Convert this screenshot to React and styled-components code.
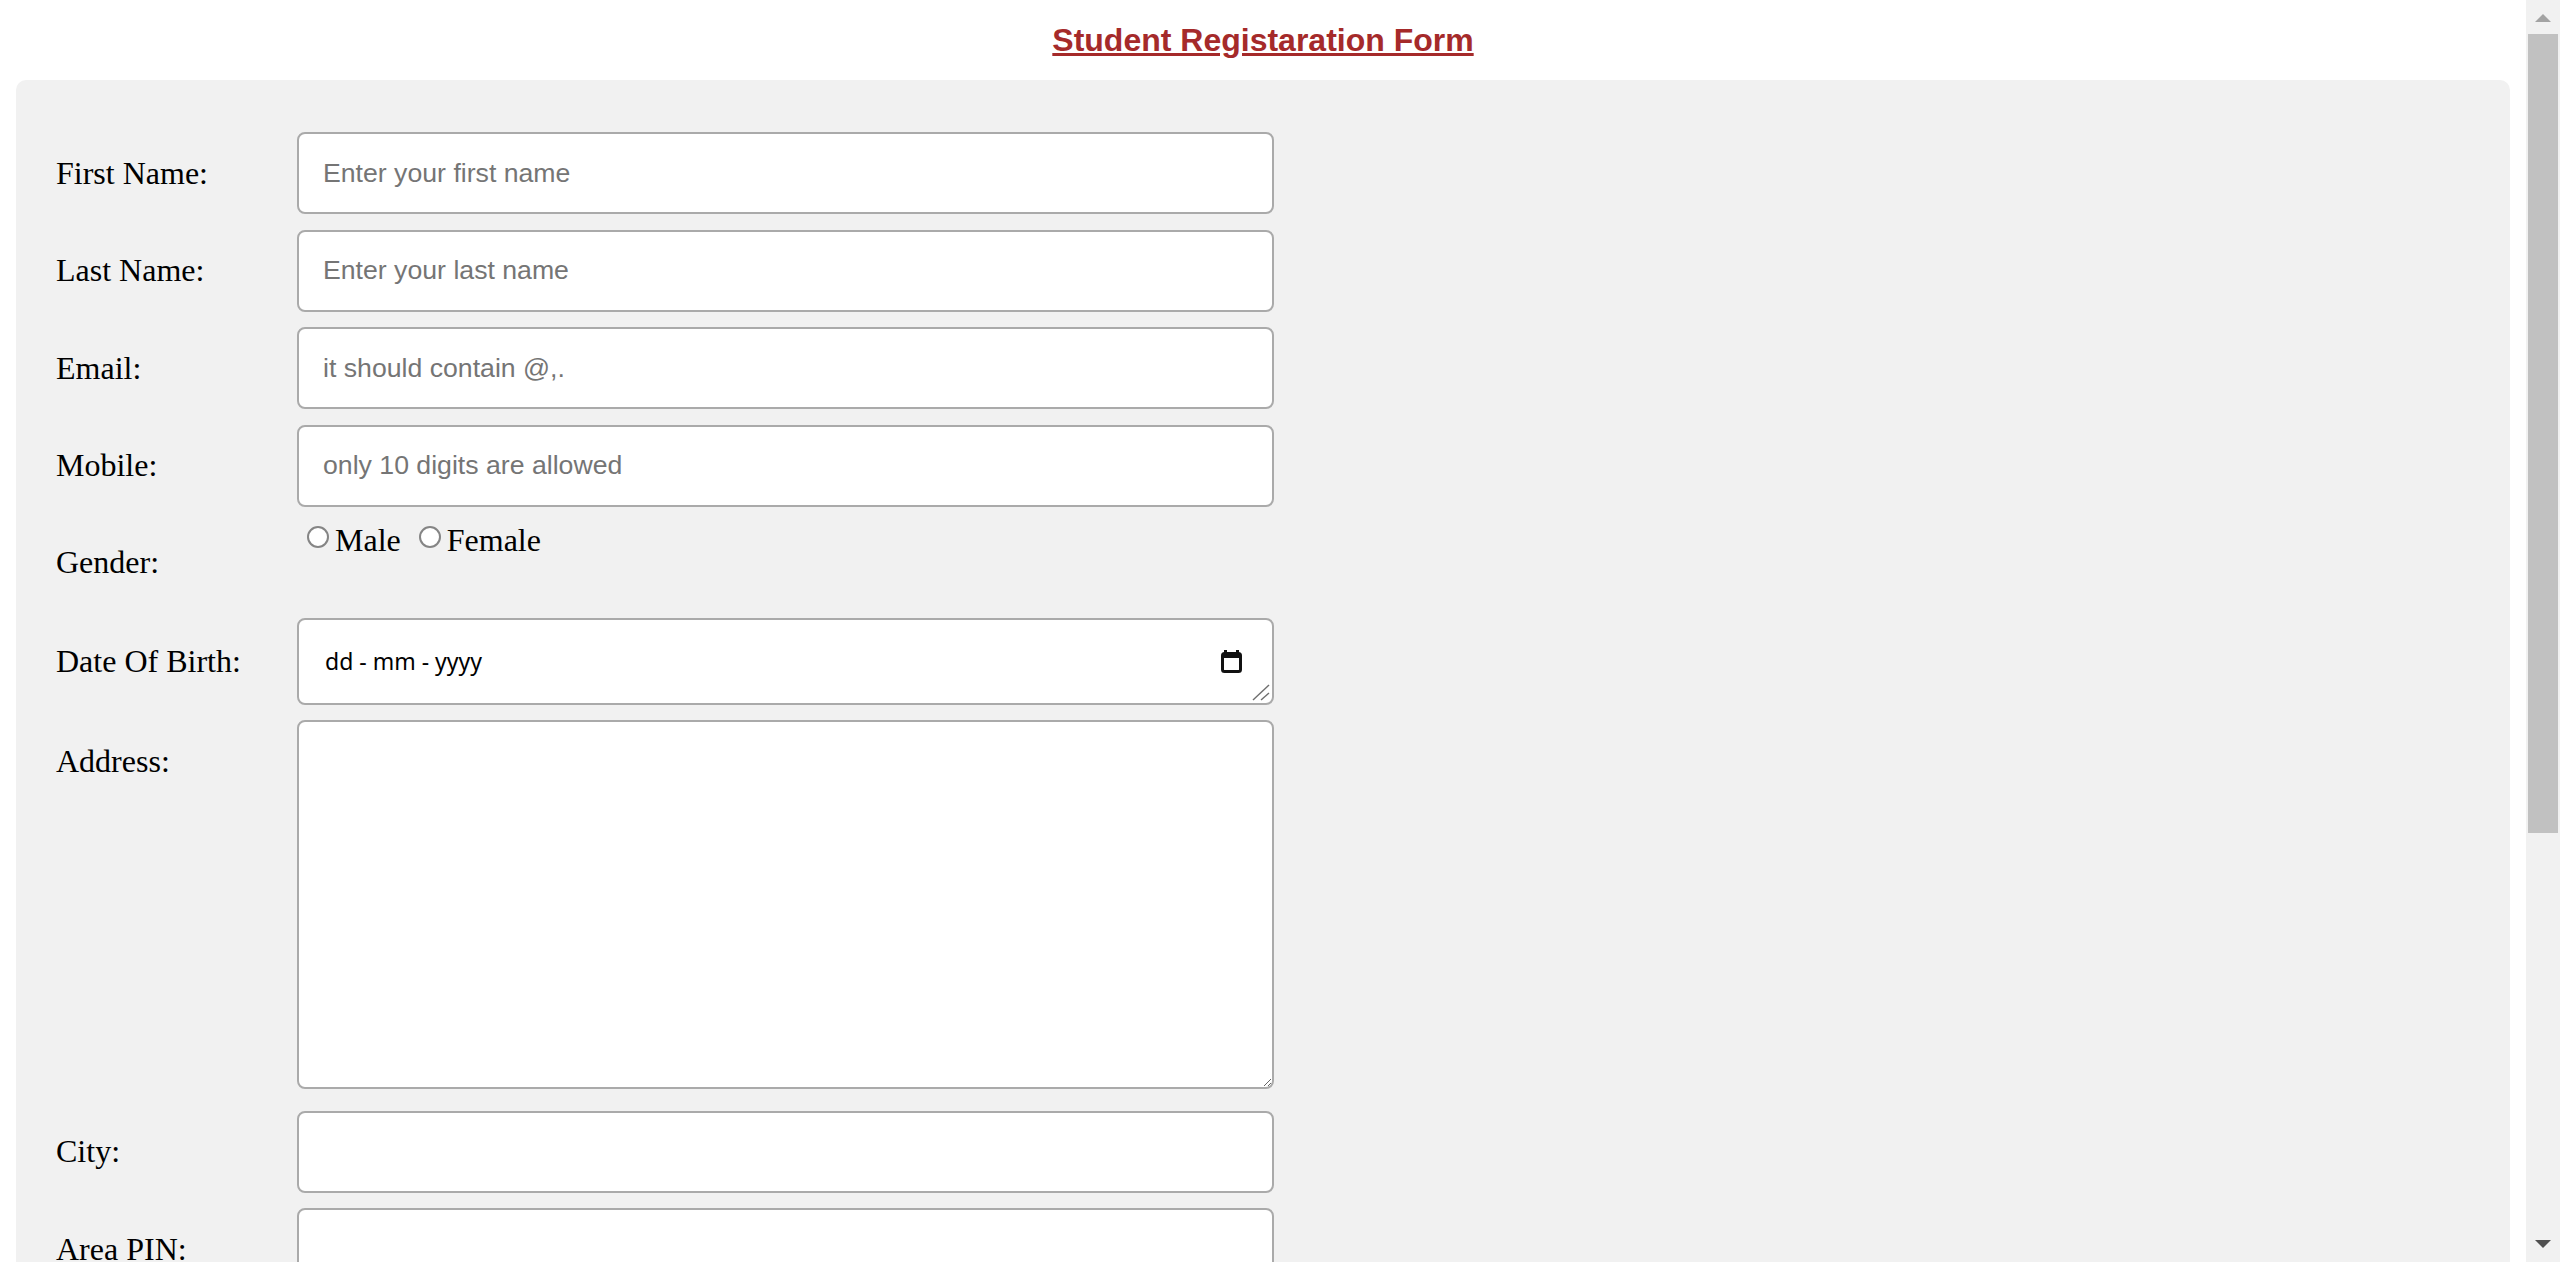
import React from 'react'
import styled, { createGlobalStyle } from 'styled-components'

const GlobalStyle = createGlobalStyle`
html, body {
    margin: 0;
    background: #fff;
    overflow: hidden;
}
body {
    font-family: "Liberation Serif", "Times New Roman", serif;
    color: #000;
}
`

const Shell = styled.div`
display: flex;
align-items: flex-start;
`

const Page = styled.div`
flex: 1;
min-width: 0;
padding: 16px;
`

const ScrollBar = styled.div`
position: sticky;
top: 0;
flex: none;
width: 34px;
height: 100vh;
background: #f1f1f1;
display: flex;
flex-direction: column;
`

const ScrollButton = styled.div`
flex: none;
height: 34px;
display: flex;
justify-content: center;
align-items: ${p => (p.$down ? 'flex-end' : 'flex-start')};
padding: ${p => (p.$down ? '0 0 14px' : '14px 0 0')};
box-sizing: border-box;
`

const Arrow = styled.div`
width: 0;
height: 0;
border-left: 8px solid transparent;
border-right: 8px solid transparent;
${p => p.$down
    ? 'border-top: 8px solid #505050;'
    : 'border-bottom: 8px solid #a3a3a3;'}
`

const Track = styled.div`
flex: 1;
padding: 0 2px;
`

const Thumb = styled.div`
height: 799px;
background: #c1c1c1;
`

const Title = styled.h2`
margin: 6px 0 22px;
font-family: "Liberation Sans", Arial, sans-serif;
font-size: 32px;
font-weight: bold;
line-height: 36px;
text-align: center;
color: #a52a2a;
text-decoration: underline;
`

const Panel = styled.form`
box-sizing: border-box;
min-height: 1790px;
padding: 52px 40px;
background: #f1f1f1;
border-radius: 10px;
display: flex;
flex-direction: column;
gap: 15.5px;
`

const Row = styled.div`
display: flex;
align-items: ${p => (p.$top ? 'flex-start' : 'center')};
min-height: ${p => p.$height || 0}px;
margin-bottom: ${p => p.$after || 0}px;
`

const Label = styled.label`
flex: none;
width: 241px;
padding-top: ${p => p.$pad || 0}px;
font-size: 32px;
`

const fieldBase = `
box-sizing: border-box;
width: 977px;
border: 2px solid #aaa;
border-radius: 8px;
background: #fff;
font-family: "Liberation Sans", Arial, sans-serif;
font-size: 26.67px;
color: #000;
outline: none;
`

const TextInput = styled.input`
${fieldBase}
height: 82px;
padding: 0 24px;
&::placeholder {
    color: #757575;
}
`

const TextArea = styled.textarea`
${fieldBase}
display: block;
height: 369px;
padding: 24px;
resize: both;
`

const DateBox = styled.div`
${fieldBase}
position: relative;
height: 87px;
padding: 0 30px 0 26px;
display: flex;
align-items: center;
justify-content: space-between;
`

const DateText = styled.span`
font-family: "Noto Sans", "Open Sans", sans-serif;
font-size: 23px;
white-space: pre;
color: #000;
`

const Grip = styled.svg`
position: absolute;
right: 2px;
bottom: 2px;
`

const RadioGroup = styled.div`
align-self: flex-start;
font-size: 32px;
`

const Radio = styled.input`
appearance: none;
box-sizing: border-box;
display: inline-block;
width: 22px;
height: 22px;
margin: 0 6px 0 10px;
border: 2px solid #858585;
border-radius: 50%;
background: #fff;
vertical-align: 3px;
`

const CalendarIcon = () => (
    <svg width="21" height="23" viewBox="0 0 21 23">
        <rect x="3" y="0" width="3" height="4" fill="#111" />
        <rect x="15" y="0" width="3" height="4" fill="#111" />
        <rect x="1.5" y="3.5" width="18" height="18" rx="2" fill="none" stroke="#111" strokeWidth="3" />
        <rect x="1" y="3" width="19" height="5" fill="#111" />
    </svg>
)

const TextRow = ({ label, placeholder }) => (
    <Row>
        <Label>{label}</Label>
        <TextInput type="text" placeholder={placeholder} />
    </Row>
)

const App = () => {
    return (
        <Shell>
            <GlobalStyle />
            <Page>
                <Title>Student Registaration Form</Title>
                <Panel>
                    <TextRow label="First Name:" placeholder="Enter your first name" />
                    <TextRow label="Last Name:" placeholder="Enter your last name" />
                    <TextRow label="Email:" placeholder="it should contain @,." />
                    <TextRow label="Mobile:" placeholder="only 10 digits are allowed" />

                    <Row $height={80}>
                        <Label>Gender:</Label>
                        <RadioGroup>
                            <Radio type="radio" name="gender" />Male{' '}
                            <Radio type="radio" name="gender" />Female
                        </RadioGroup>
                    </Row>

                    <Row>
                        <Label>Date Of Birth:</Label>
                        <DateBox>
                            <DateText>dd - mm - yyyy</DateText>
                            <CalendarIcon />
                            <Grip width="18" height="18" viewBox="0 0 18 18">
                                <line x1="1" y1="17" x2="17" y2="2" stroke="#6e6e6e" strokeWidth="1.4" />
                                <line x1="9" y1="17" x2="17" y2="10" stroke="#6e6e6e" strokeWidth="1.4" />
                            </Grip>
                        </DateBox>
                    </Row>

                    <Row $top $after={6}>
                        <Label $pad={23}>Address:</Label>
                        <TextArea />
                    </Row>

                    <TextRow label="City:" />
                    <TextRow label="Area PIN:" />
                </Panel>
            </Page>

            <ScrollBar>
                <ScrollButton><Arrow /></ScrollButton>
                <Track><Thumb /></Track>
                <ScrollButton $down><Arrow $down /></ScrollButton>
            </ScrollBar>
        </Shell>
    )
}

export default App
